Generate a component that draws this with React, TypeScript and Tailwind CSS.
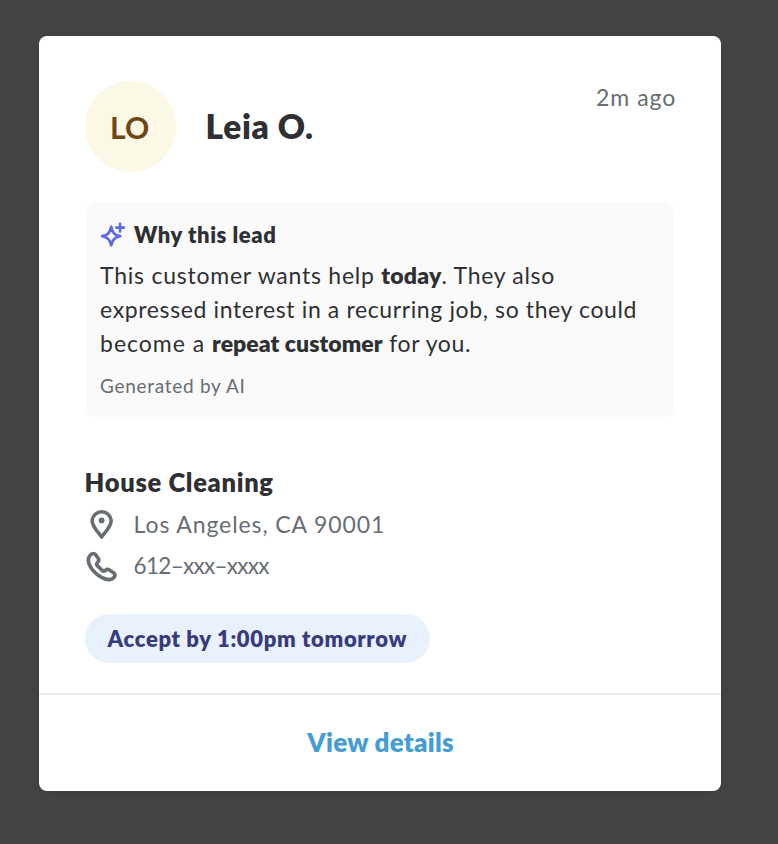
import React from "react";

function Sparkle() {
  return (
    <svg width="26" height="26" viewBox="0 0 26 26" fill="none" stroke="#5f6be0" className="shrink-0">
      <path d="M11.2 4.8C12.4 11 14.8 13.2 20.2 14.2C14.8 15.3 12.4 17.4 11.2 23.2C10 17.4 7.6 15.3 2.2 14.2C7.6 13.2 10 11 11.2 4.8Z" strokeWidth="2.8" strokeLinejoin="round" />
      <path d="M20.1 1.7v7.8M16.2 5.6H24" strokeWidth="2.6" strokeLinecap="round" />
    </svg>
  );
}

function Pin() {
  return (
    <svg width="34" height="34" viewBox="0 0 34 34" fill="none" className="shrink-0">
      <path d="M16.6 29C13.6 24.6 7.1 18.6 7.1 12.4A9.6 9.6 0 0 1 26.2 12.4C26.2 18.6 19.6 24.6 16.6 29Z" stroke="#676d73" strokeWidth="3.6" strokeLinejoin="round" />
      <circle cx="16.6" cy="12.4" r="2.9" fill="#676d73" />
    </svg>
  );
}

function Phone() {
  return (
    <svg width="34" height="34" viewBox="0 0 34 34" fill="none" className="shrink-0">
      <path d="M5.7 4.7C7.3 3.1 9.3 3.1 10.6 4.7L13.3 8.5C14.2 10 13.8 11.3 12.6 12.4C11.5 13.6 11.5 14.6 12.3 15.6L17.1 20.3C18.2 21.3 19.2 21.3 20.4 20.3C21.6 19.3 23 19.1 24.4 20L28.5 22.7C30.4 24.1 30.4 25.8 28.9 27.4C26.2 30.4 21.5 29.9 17 27.6C12.4 25.2 8.1 21.4 5.5 16.9C3 12.5 2.2 7.9 5.7 4.7Z" stroke="#676d73" strokeWidth="3.7" strokeLinejoin="round" />
    </svg>
  );
}

export default function App() {
  return (
    <div className="h-[844px] w-[778px] bg-[#444444] pt-9 pl-[39.3px] font-[Lato,sans-serif] text-[#2f3033]">
      <main className="flex h-[755px] w-[681.4px] flex-col overflow-hidden rounded-lg bg-white whitespace-nowrap shadow-[0_3px_12px_rgba(0,0,0,0.1)]">
        <div className="h-[657px] px-[45.3px] pt-[45px]">
          <header className="flex h-[91px] items-center">
            <div className="flex size-[91px] items-center justify-center rounded-full bg-[#fcf8e6] pt-px pr-px text-[30px] font-bold text-[#6f4716]">LO</div>
            <h1 className="ml-[30px] text-[33.5px] font-extrabold tracking-[0.6px]">Leia O.</h1>
            <time className="-mr-px ml-auto self-start text-[23px] leading-[33px] tracking-[1px] text-[#676d73]">2m ago</time>
          </header>
          <section className="mt-[30px] h-[215px] rounded-xl bg-[#fafafa] px-[15.5px] pt-[17px]">
            <div className="flex h-[31px] items-center gap-2">
              <Sparkle />
              <h2 className="pb-px text-[22px] font-extrabold tracking-[0.55px]">Why this lead</h2>
            </div>
            <div className="pt-[8px] text-[23px] leading-[34px]">
              <p><span className="tracking-[0.76px]">This customer wants help </span><b className="font-extrabold tracking-[0.2px]">today</b><span className="tracking-[0.7px]">. They also</span></p>
              <p><span className="tracking-[0.62px]">expressed interest in a recurring job, so they could</span></p>
              <p><span className="tracking-[0.98px]">become a </span><b className="font-extrabold tracking-[0.05px]">repeat customer</b><span className="tracking-[0.65px]"> for you.</span></p>
            </div>
            <p className="mt-[12px] text-[19px] leading-[28px] tracking-[0.7px] text-[#676d73]">Generated by AI</p>
          </section>
          <h2 className="mt-[48px] text-[25.5px] leading-[34px] font-extrabold tracking-[0.68px]">House Cleaning</h2>
          <div className="mt-[5px] flex h-[42px] items-center gap-[15px] text-[23px] tracking-[0.9px] text-[#676d73]">
            <Pin />
            <span className="pb-[2px]">Los Angeles, CA 90001</span>
          </div>
          <div className="flex h-[42px] items-center gap-[15px] text-[22.5px] tracking-[-0.7px] text-[#676d73]">
            <Phone />
            <span className="pb-[2px]">612–xxx–xxxx</span>
          </div>
          <div className="mt-[26px] flex h-[49px] w-[345.5px] items-center justify-center rounded-full bg-[#e9f1fd] pb-px text-[22px] font-extrabold tracking-[0.65px] text-[#383b7c]">Accept by 1:00pm tomorrow</div>
        </div>
        <button className="flex flex-1 items-center justify-center border-t-2 border-[#e9eced] pb-[2px] pl-px text-[26px] font-extrabold tracking-[0.25px] text-[#449dd5]">View details</button>
      </main>
    </div>
  );
}
